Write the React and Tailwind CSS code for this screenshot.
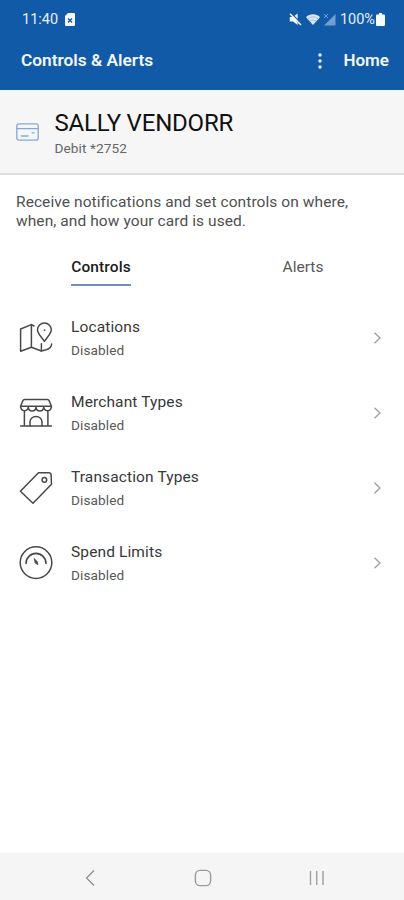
import React from 'react';

const MapIcon = () => (
  <svg width="34" height="34" viewBox="0 0 34 34" fill="none" stroke="#484848" strokeWidth="1.5" strokeLinejoin="round" strokeLinecap="round">
    <path d="M15 5 12.4 3.6 1.6 8V30.2L12.4 26.2 22.4 30 27 28.8Q32.6 27.2 32.6 23" />
    <path d="M12.4 3.6V26.2M22.4 22.8V30" />
    <path d="M25.4 20.3C22.4 15.8 18.5 12.8 18.5 8.8a6.9 6.9 0 0 1 13.8 0C32.3 12.8 28.4 15.8 25.4 20.3Z" />
    <circle cx="25.4" cy="9.2" r="0.4" strokeWidth="1" />
  </svg>
);

const StoreIcon = () => (
  <svg width="34" height="34" viewBox="0 0 34 34" fill="none" stroke="#484848" strokeWidth="1.5" strokeLinejoin="round" strokeLinecap="round">
    <path d="M5.5 3.6H28.5Q29.6 3.6 30.2 4.8L32.4 10.2H1.6L3.8 4.8Q4.4 3.6 5.5 3.6Z" />
    <path d="M1.6 10.2c0 5.8 7.7 5.8 7.7 0.6c0 5.6 7.7 5.6 7.7 0c0 5.6 7.7 5.6 7.7 0c0 5.2 7.7 5.2 7.7-0.6" />
    <path d="M5.4 15V29.8M28.9 15V29.8M1.6 30H32.4" />
    <path d="M11 30V25.8a6 5.4 0 0 1 12 0V30" />
  </svg>
);

const TagIcon = () => (
  <svg width="34" height="34" viewBox="0 0 34 34" fill="none" stroke="#484848" strokeWidth="1.5" strokeLinejoin="round">
    <path d="M19.5 1.8H29.8Q31.9 1.8 32.1 3.8L32.5 13.2 14 32.2 1.4 20.3Z" />
    <circle cx="25.4" cy="8.9" r="2.3" />
  </svg>
);

const GaugeIcon = () => (
  <svg width="34" height="34" viewBox="0 0 34 34" fill="none" stroke="#484848" strokeWidth="1.5" strokeLinecap="round">
    <circle cx="17" cy="16.6" r="15.8" />
    <path d="M7 17.4a10 10 0 0 1 20 0" strokeWidth="1.6" />
    <path d="M15.2 12.8 16.2 17 18.9 18.8 18.2 15.7Z" fill="#484848" strokeWidth="0.8" />
  </svg>
);

const CardIcon = () => (
  <svg width="23" height="18" viewBox="0 0 23 18" fill="none" stroke="#86a9d6" strokeWidth="1.3" strokeLinecap="round">
    <rect x="0.8" y="0.9" width="21.4" height="16.2" rx="2" />
    <path d="M1 5.6H22M5.3 13H12M16.2 9.9H18" />
  </svg>
);

const items = [
  { title: 'Locations', icon: MapIcon },
  { title: 'Merchant Types', icon: StoreIcon },
  { title: 'Transaction Types', icon: TagIcon },
  { title: 'Spend Limits', icon: GaugeIcon },
];

const StatusBar = () => (
  <div className="flex h-[38px] items-center pl-[22px] pr-[19px] pt-px text-[14.5px] text-[#e6effa]">
    <span>11:40</span>
    <svg className="ml-[7px]" width="10" height="13" viewBox="0 0 10 13">
      <path d="M3 0H9a1 1 0 0 1 1 1V12a1 1 0 0 1-1 1H1a1 1 0 0 1-1-1V3Z" fill="#f4f8fe" />
      <path d="M3 5.5 7 9.5M7 5.5 3 9.5" stroke="#115aa8" strokeWidth="1.4" />
    </svg>
    <div className="ml-auto flex items-center">
      <svg width="13" height="13" viewBox="0 0 13 13" fill="#f4f8fe">
        <path d="M0.8 4H4L8.6 0.5V12L4 8.6H0.8Z" />
        <path d="M2.2 0.4 12.6 10.8" stroke="#115aa8" strokeWidth="1.4" />
        <path d="M1 0.8 12 12" stroke="#f4f8fe" strokeWidth="1.5" />
      </svg>
      <svg className="ml-[4px]" width="14" height="11" viewBox="0 0 14 11">
        <path d="M0 3.2C4-0.6 10-0.6 14 3.2L7 11Z" fill="#dce8f6" />
        <path d="M1.8 4.9c3.2-2.6 7.2-2.6 10.4 0M4 7.2c2-1.5 4-1.5 6 0" fill="none" stroke="#7fa6d2" strokeWidth="0.7" />
      </svg>
      <svg className="ml-[3px]" width="13" height="13" viewBox="0 0 13 13">
        <path d="M12.5 1V12.5H1Z" fill="#719fce" />
        <path d="M1 1 5 5M5 1 1 5" stroke="#719fce" strokeWidth="1" />
      </svg>
      <span className="ml-[4px] text-[14.5px]">100%</span>
      <svg className="ml-px" width="9" height="13" viewBox="0 0 9 13" fill="#f8fbff">
        <path d="M3 0H6V1.5H8a1 1 0 0 1 1 1V12a1 1 0 0 1-1 1H1a1 1 0 0 1-1-1V2.5a1 1 0 0 1 1-1H3Z" />
      </svg>
    </div>
  </div>
);

const ControlRow = ({ item }) => {
  const Icon = item.icon;

  return (
    <li className="flex h-[75px] items-center pl-[19px] pr-[22px]">
      <Icon />
      <div className="ml-[18px] flex-1 pt-[3px]">
        <h2 className="text-[15.5px] leading-[23px] tracking-[0.12px] text-[#383838]">{item.title}</h2>
        <p className="text-[13.6px] leading-[23px] tracking-[0.1px] text-[#585858]">Disabled</p>
      </div>
      <svg width="9" height="14" viewBox="0 0 9 14" fill="none" stroke="#9a9a9a" strokeWidth="1.2">
        <path d="M1.5 1.8 7 7 1.5 12.2" />
      </svg>
    </li>
  );
};

const App = () => {
  return (
    <div className="flex h-[900px] w-[404px] flex-col overflow-hidden bg-white font-['Roboto',sans-serif]">
      {/* App bar */}
      <header className="h-[90px] bg-[#115aa8] text-white">
        <StatusBar />
        <div className="flex h-[46px] items-center pl-[21px] pr-[15px] text-[17.3px] font-semibold text-[#f2f7fd]">
          <h1>Controls &amp; Alerts</h1>
          <svg className="ml-auto" width="4" height="16" viewBox="0 0 4 16" fill="#e6effa">
            <circle cx="2" cy="2" r="1.7" />
            <circle cx="2" cy="8" r="1.7" />
            <circle cx="2" cy="14" r="1.7" />
          </svg>
          <span className="ml-[21px] text-[17px]">Home</span>
        </div>
      </header>

      {/* Card summary */}
      <section className="flex h-[85px] items-center border-b-2 border-[#dedede] bg-[#f6f6f6] pl-4">
        <CardIcon />
        <div className="ml-[15.5px] pt-[4px]">
          <p className="text-[24px] leading-[28px] tracking-[-0.2px] text-[#111111]">SALLY VENDORR</p>
          <p className="text-[13.6px] leading-[22px] tracking-[0.1px] text-[#666666]">Debit *2752</p>
        </div>
      </section>

      {/* Controls */}
      <main className="flex-1">
        <p className="pl-4 pt-[18px] text-[15.5px] leading-[19px] tracking-[0.08px] text-[#505050]">
          Receive notifications and set controls on where,
          <br />
          when, and how your card is used.
        </p>
        <div className="mt-[25px] flex h-[31px] text-[15.5px] leading-[24px]">
          <div className="flex w-1/2 justify-center">
            <span className="h-[30px] border-b-2 border-[#6f8fc4] font-medium leading-[23px] tracking-[0.12px] text-[#1c1c1c]">Controls</span>
          </div>
          <div className="flex w-1/2 justify-center">
            <span className="leading-[23px] text-[#585858]">Alerts</span>
          </div>
        </div>
        <ul className="mt-[13px]">
          {items.map((item) => (
            <ControlRow key={item.title} item={item} />
          ))}
        </ul>
      </main>

      {/* System navigation */}
      <nav className="flex h-[47px] items-center bg-[#f5f5f5] pl-[84px] pt-[2px]">
        <svg width="12" height="18" viewBox="0 0 12 18" fill="none" stroke="#909090" strokeWidth="1.3">
          <path d="M10 1.5 2.5 9 10 16.5" />
        </svg>
        <svg className="ml-[98px]" width="18" height="18" viewBox="0 0 18 18" fill="none" stroke="#9a9a9a" strokeWidth="1.4">
          <rect x="1.4" y="1.4" width="15.2" height="15.2" rx="4.6" />
        </svg>
        <svg className="ml-[97px]" width="16" height="16" viewBox="0 0 16 16" stroke="#a0a0a0" strokeWidth="1.4">
          <path d="M1.5 1V15M7.7 1V15M14 1V15" />
        </svg>
      </nav>
    </div>
  );
};

export default App;
